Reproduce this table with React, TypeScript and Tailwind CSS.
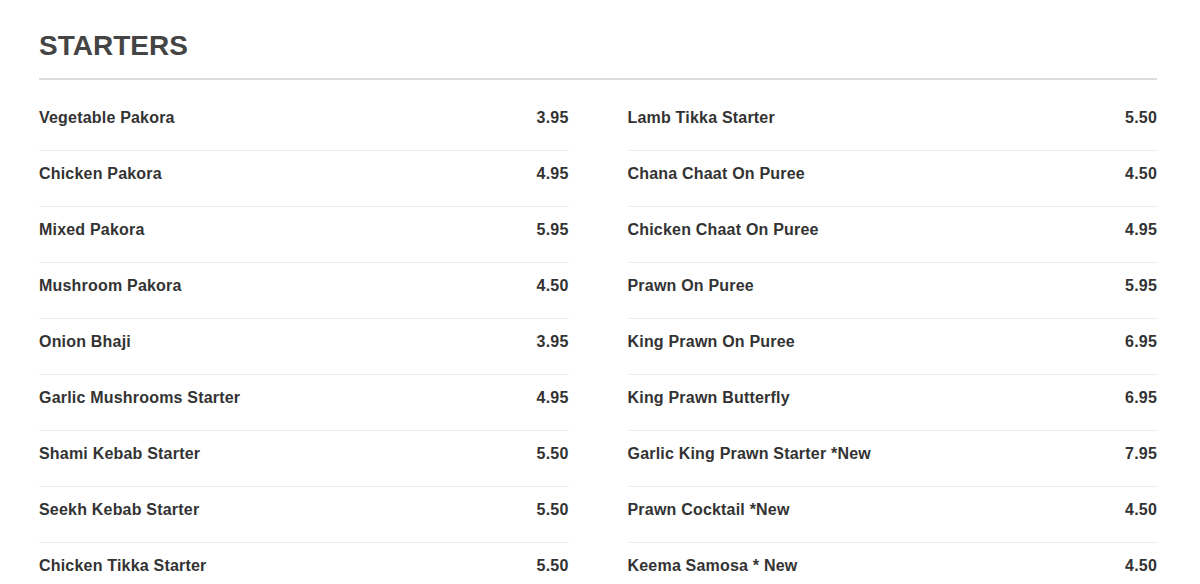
const left: [string, string][] = [
  ["Vegetable Pakora", "3.95"],
  ["Chicken Pakora", "4.95"],
  ["Mixed Pakora", "5.95"],
  ["Mushroom Pakora", "4.50"],
  ["Onion Bhaji", "3.95"],
  ["Garlic Mushrooms Starter", "4.95"],
  ["Shami Kebab Starter", "5.50"],
  ["Seekh Kebab Starter", "5.50"],
  ["Chicken Tikka Starter", "5.50"],
];

const right: [string, string][] = [
  ["Lamb Tikka Starter", "5.50"],
  ["Chana Chaat On Puree", "4.50"],
  ["Chicken Chaat On Puree", "4.95"],
  ["Prawn On Puree", "5.95"],
  ["King Prawn On Puree", "6.95"],
  ["King Prawn Butterfly", "6.95"],
  ["Garlic King Prawn Starter *New", "7.95"],
  ["Prawn Cocktail *New", "4.50"],
  ["Keema Samosa * New", "4.50"],
];

function Column({ items }: { items: [string, string][] }) {
  return (
    <ul>
      {items.map(([name, price]) => (
        <li
          key={name}
          className="flex items-center justify-between border-b border-[#ebebeb] pt-[13px] pb-[22px] text-[16px] leading-[20px] font-bold tracking-[0.2px] text-[#333]"
        >
          <span>{name}</span>
          <span>{price}</span>
        </li>
      ))}
    </ul>
  );
}

export default function App() {
  return (
    <div className="min-h-[584px] bg-white font-['Liberation_Sans',Arial,sans-serif]">
      <div className="w-[1118px] ml-[39px] pt-[28px]">
        <h2 className="text-[28px] leading-[36px] font-bold text-[#444] pb-[14px] border-b-2 border-[#dddddd]">
          STARTERS
        </h2>
        <div className="mt-[15px] grid grid-cols-2 gap-x-[59px]">
          <Column items={left} />
          <Column items={right} />
        </div>
      </div>
    </div>
  );
}
